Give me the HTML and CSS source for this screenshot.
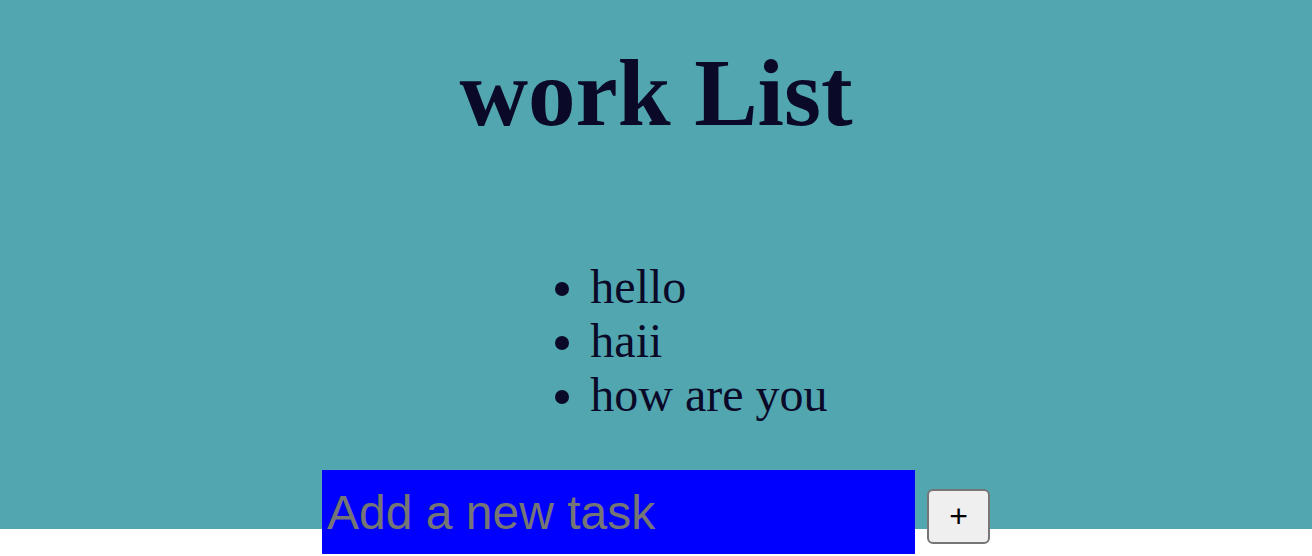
FILE: index.html
```
<!DOCTYPE html>
<html lang="en">
<head>
<meta charset="utf-8">
<title>work List</title>
<link rel="stylesheet" href="styles.css">
</head>
<body>
<main class="board">
  <h1 class="title">work List</h1>
  <ul class="tasks">
    <li>hello</li>
    <li>haii</li>
    <li>how are you</li>
  </ul>
  <form class="add-form">
    <input class="task-input" type="text" placeholder="Add a new task" aria-label="Add a new task">
    <button class="add-button" type="button" aria-label="Add task">+</button>
  </form>
</main>
</body>
</html>
```

FILE: styles.css
```
html {
  background: #fff;
}

body {
  margin: 0;
  padding-bottom: 27px;
}

.board {
  display: flex;
  flex-direction: column;
  align-items: center;
  padding-top: 38px;
  background: #52a6b0;
  color: #0a0a28;
  font-family: "Liberation Serif", "Times New Roman", serif;
  font-size: 48px;
}

.title {
  margin: 0;
  font-size: 95px;
  line-height: 110px;
}

.tasks {
  margin: 112px 0 0;
  padding-left: 106px;
  line-height: 54px;
}

.add-form {
  display: flex;
  align-items: center;
  gap: 12px;
  margin: 48px 0 -25px;
}

.task-input {
  box-sizing: border-box;
  width: 593px;
  height: 84px;
  padding: 0 5px;
  border: 0;
  border-radius: 0;
  background: #00f;
  color: #fff;
  font-family: "Liberation Sans", Arial, sans-serif;
  font-size: 48px;
}

.task-input::placeholder {
  color: #757575;
  opacity: 1;
}

.add-button {
  box-sizing: border-box;
  width: 63px;
  height: 55px;
  margin-top: 9px;
  padding: 0;
  border: 2px solid #767676;
  border-radius: 6px;
  background: #efefef;
  color: #000;
  font-family: "Liberation Sans", Arial, sans-serif;
  font-size: 32px;
}
```
